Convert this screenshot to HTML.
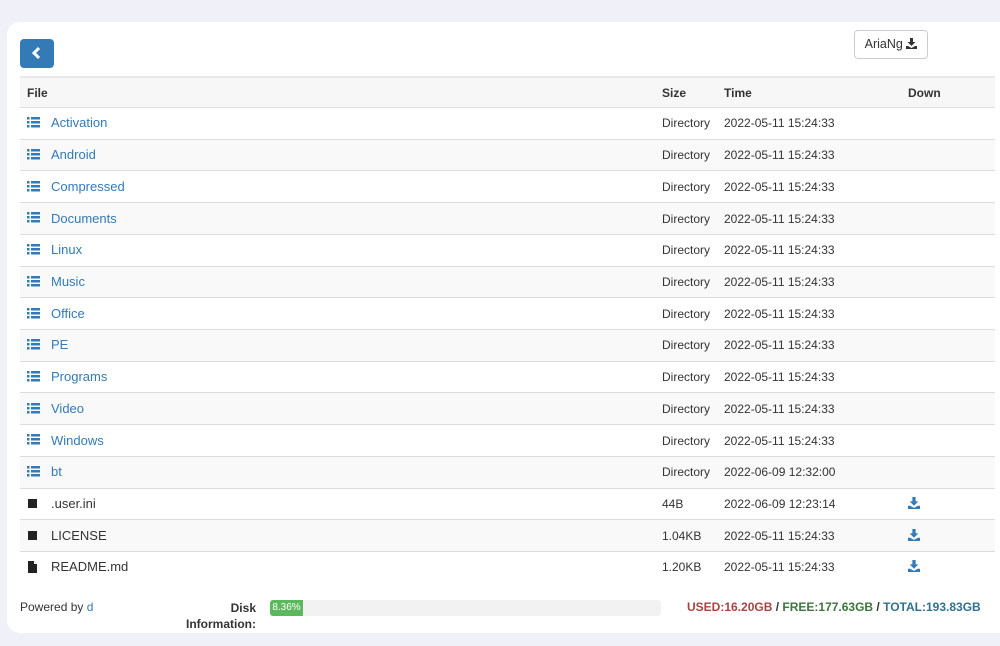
<!DOCTYPE html>
<html><head><meta charset="utf-8"><style>
body{margin:0;background:#f0f1f8;font-family:"Liberation Sans",Arial,sans-serif;font-size:12px;color:#333;width:1000px;height:646px;overflow:hidden;position:relative}
.card{position:absolute;left:7px;top:22px;width:1010px;height:611px;background:#fff;border-radius:13px}
.back{position:absolute;left:20px;top:39px;width:34px;height:29px;background:#337ab7;border-radius:4px}
.aria{position:absolute;left:854px;top:30px;width:72px;height:27px;border:1px solid #ccc;border-radius:4px;font-size:12.5px;line-height:27px;text-align:center;color:#333}
table{position:absolute;left:20px;top:76px;width:975px;border-collapse:collapse;table-layout:fixed}
td,th{height:30.73px;border-top:1px solid #ddd;padding:0;text-align:left;white-space:nowrap}
th{font-weight:bold;border-top:2px solid #e8e8e8;border-bottom:1px solid #ddd;height:29px;background:#f7f7f7}
tr:nth-child(odd) td{background:#f9f9f9}
.ic{display:inline-block;width:24px;padding-left:7px;vertical-align:middle}
.n{font-size:13px}
a{color:#337ab7;text-decoration:none}
.foot{position:absolute;top:600px;font-size:12px}
</style></head><body>
<div class="card"></div>
<div class="back"><svg width="34" height="29"><path d="M19 9l-5 5 5 5" stroke="#fff" stroke-width="3" fill="none"/></svg></div>
<div class="aria">AriaNg <svg width="11" height="11" viewBox="0 0 11 11" style="vertical-align:-1px"><path d="M4 0h3v4h2.5L5.5 8 1.5 4H4z M0 8h2l3.5 2 3.5-2h2v3H0z" fill="#333"/></svg></div>
<table>
<colgroup><col style="width:642px"><col style="width:62px"><col style="width:184px"><col></colgroup>
<tr><th style="padding-left:7px">File</th><th>Size</th><th>Time</th><th>Down</th></tr>
<tr><td><span class="ic"><svg width="13" height="11"><g fill="#337ab7"><rect x="0" y="0" width="2.5" height="2.5"/><rect x="4" y="0" width="9" height="2.5"/><rect x="0" y="4" width="2.5" height="2.5"/><rect x="4" y="4" width="9" height="2.5"/><rect x="0" y="8" width="2.5" height="2.5"/><rect x="4" y="8" width="9" height="2.5"/></g></svg></span><a class="n">Activation</a></td><td>Directory</td><td>2022-05-11 15:24:33</td><td></td></tr>
<tr><td><span class="ic"><svg width="13" height="11"><g fill="#337ab7"><rect x="0" y="0" width="2.5" height="2.5"/><rect x="4" y="0" width="9" height="2.5"/><rect x="0" y="4" width="2.5" height="2.5"/><rect x="4" y="4" width="9" height="2.5"/><rect x="0" y="8" width="2.5" height="2.5"/><rect x="4" y="8" width="9" height="2.5"/></g></svg></span><a class="n">Android</a></td><td>Directory</td><td>2022-05-11 15:24:33</td><td></td></tr>
<tr><td><span class="ic"><svg width="13" height="11"><g fill="#337ab7"><rect x="0" y="0" width="2.5" height="2.5"/><rect x="4" y="0" width="9" height="2.5"/><rect x="0" y="4" width="2.5" height="2.5"/><rect x="4" y="4" width="9" height="2.5"/><rect x="0" y="8" width="2.5" height="2.5"/><rect x="4" y="8" width="9" height="2.5"/></g></svg></span><a class="n">Compressed</a></td><td>Directory</td><td>2022-05-11 15:24:33</td><td></td></tr>
<tr><td><span class="ic"><svg width="13" height="11"><g fill="#337ab7"><rect x="0" y="0" width="2.5" height="2.5"/><rect x="4" y="0" width="9" height="2.5"/><rect x="0" y="4" width="2.5" height="2.5"/><rect x="4" y="4" width="9" height="2.5"/><rect x="0" y="8" width="2.5" height="2.5"/><rect x="4" y="8" width="9" height="2.5"/></g></svg></span><a class="n">Documents</a></td><td>Directory</td><td>2022-05-11 15:24:33</td><td></td></tr>
<tr><td><span class="ic"><svg width="13" height="11"><g fill="#337ab7"><rect x="0" y="0" width="2.5" height="2.5"/><rect x="4" y="0" width="9" height="2.5"/><rect x="0" y="4" width="2.5" height="2.5"/><rect x="4" y="4" width="9" height="2.5"/><rect x="0" y="8" width="2.5" height="2.5"/><rect x="4" y="8" width="9" height="2.5"/></g></svg></span><a class="n">Linux</a></td><td>Directory</td><td>2022-05-11 15:24:33</td><td></td></tr>
<tr><td><span class="ic"><svg width="13" height="11"><g fill="#337ab7"><rect x="0" y="0" width="2.5" height="2.5"/><rect x="4" y="0" width="9" height="2.5"/><rect x="0" y="4" width="2.5" height="2.5"/><rect x="4" y="4" width="9" height="2.5"/><rect x="0" y="8" width="2.5" height="2.5"/><rect x="4" y="8" width="9" height="2.5"/></g></svg></span><a class="n">Music</a></td><td>Directory</td><td>2022-05-11 15:24:33</td><td></td></tr>
<tr><td><span class="ic"><svg width="13" height="11"><g fill="#337ab7"><rect x="0" y="0" width="2.5" height="2.5"/><rect x="4" y="0" width="9" height="2.5"/><rect x="0" y="4" width="2.5" height="2.5"/><rect x="4" y="4" width="9" height="2.5"/><rect x="0" y="8" width="2.5" height="2.5"/><rect x="4" y="8" width="9" height="2.5"/></g></svg></span><a class="n">Office</a></td><td>Directory</td><td>2022-05-11 15:24:33</td><td></td></tr>
<tr><td><span class="ic"><svg width="13" height="11"><g fill="#337ab7"><rect x="0" y="0" width="2.5" height="2.5"/><rect x="4" y="0" width="9" height="2.5"/><rect x="0" y="4" width="2.5" height="2.5"/><rect x="4" y="4" width="9" height="2.5"/><rect x="0" y="8" width="2.5" height="2.5"/><rect x="4" y="8" width="9" height="2.5"/></g></svg></span><a class="n">PE</a></td><td>Directory</td><td>2022-05-11 15:24:33</td><td></td></tr>
<tr><td><span class="ic"><svg width="13" height="11"><g fill="#337ab7"><rect x="0" y="0" width="2.5" height="2.5"/><rect x="4" y="0" width="9" height="2.5"/><rect x="0" y="4" width="2.5" height="2.5"/><rect x="4" y="4" width="9" height="2.5"/><rect x="0" y="8" width="2.5" height="2.5"/><rect x="4" y="8" width="9" height="2.5"/></g></svg></span><a class="n">Programs</a></td><td>Directory</td><td>2022-05-11 15:24:33</td><td></td></tr>
<tr><td><span class="ic"><svg width="13" height="11"><g fill="#337ab7"><rect x="0" y="0" width="2.5" height="2.5"/><rect x="4" y="0" width="9" height="2.5"/><rect x="0" y="4" width="2.5" height="2.5"/><rect x="4" y="4" width="9" height="2.5"/><rect x="0" y="8" width="2.5" height="2.5"/><rect x="4" y="8" width="9" height="2.5"/></g></svg></span><a class="n">Video</a></td><td>Directory</td><td>2022-05-11 15:24:33</td><td></td></tr>
<tr><td><span class="ic"><svg width="13" height="11"><g fill="#337ab7"><rect x="0" y="0" width="2.5" height="2.5"/><rect x="4" y="0" width="9" height="2.5"/><rect x="0" y="4" width="2.5" height="2.5"/><rect x="4" y="4" width="9" height="2.5"/><rect x="0" y="8" width="2.5" height="2.5"/><rect x="4" y="8" width="9" height="2.5"/></g></svg></span><a class="n">Windows</a></td><td>Directory</td><td>2022-05-11 15:24:33</td><td></td></tr>
<tr><td><span class="ic"><svg width="13" height="11"><g fill="#337ab7"><rect x="0" y="0" width="2.5" height="2.5"/><rect x="4" y="0" width="9" height="2.5"/><rect x="0" y="4" width="2.5" height="2.5"/><rect x="4" y="4" width="9" height="2.5"/><rect x="0" y="8" width="2.5" height="2.5"/><rect x="4" y="8" width="9" height="2.5"/></g></svg></span><a class="n">bt</a></td><td>Directory</td><td>2022-06-09 12:32:00</td><td></td></tr>
<tr><td><span class="ic"><svg width="11" height="11"><rect x="1" y="1" width="9" height="9" fill="#222"/></svg></span><span class="n">.user.ini</span></td><td>44B</td><td>2022-06-09 12:23:14</td><td><svg width="12" height="12" viewBox="0 0 11 11" style="vertical-align:-1px"><path d="M4 0h3v4h2.5L5.5 8 1.5 4H4z M0 8h2l3.5 2 3.5-2h2v3H0z" fill="#337ab7"/></svg></td></tr>
<tr><td><span class="ic"><svg width="11" height="11"><rect x="1" y="1" width="9" height="9" fill="#222"/></svg></span><span class="n">LICENSE</span></td><td>1.04KB</td><td>2022-05-11 15:24:33</td><td><svg width="12" height="12" viewBox="0 0 11 11" style="vertical-align:-1px"><path d="M4 0h3v4h2.5L5.5 8 1.5 4H4z M0 8h2l3.5 2 3.5-2h2v3H0z" fill="#337ab7"/></svg></td></tr>
<tr><td><span class="ic"><svg width="11" height="12"><path d="M1 0h6l3 3v9H1z" fill="#222"/><path d="M7 0v3h3z" fill="#fff"/></svg></span><span class="n">README.md</span></td><td>1.20KB</td><td>2022-05-11 15:24:33</td><td><svg width="12" height="12" viewBox="0 0 11 11" style="vertical-align:-1px"><path d="M4 0h3v4h2.5L5.5 8 1.5 4H4z M0 8h2l3.5 2 3.5-2h2v3H0z" fill="#337ab7"/></svg></td></tr>
</table>
<div class="foot" style="left:20px">Powered by <a>d</a></div>
<div style="position:absolute;left:180px;top:600px;width:76px;text-align:right;font-weight:bold;font-size:12px;line-height:16px">Disk<br>Information:</div>
<div style="position:absolute;left:270px;top:600px;width:391px;height:16px;background:#f2f2f2;border-radius:3px"><div style="width:33px;height:16px;background:#5cb85c;border-radius:3px 0 0 3px;color:#fff;font-size:10px;line-height:16px;text-align:center">8.36%</div></div>
<div class="foot" style="left:687px;font-weight:bold;font-size:12px"><span style="color:#a94442">USED:16.20GB</span> / <span style="color:#3c763d">FREE:177.63GB</span> / <span style="color:#31708f">TOTAL:193.83GB</span></div>
</body></html>
